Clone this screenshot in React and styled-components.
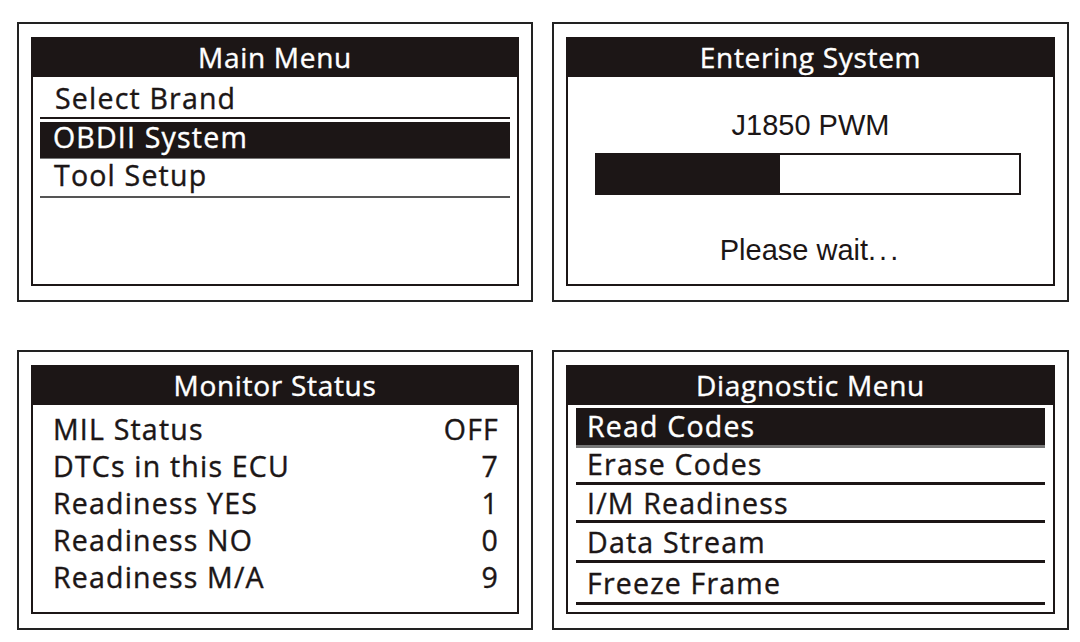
import React from "react";
import styled, { createGlobalStyle } from "styled-components";

const INK = "#1c1616";

const Global = createGlobalStyle`
  html, body { margin: 0; padding: 0; background: #ffffff; }
  body { font-family: "Open Sans", "Noto Sans", sans-serif; color: ${INK}; }
`;

const Page = styled.div`
  width: 1080px;
  height: 642px;
  box-sizing: border-box;
  padding: 22px 0 0 17px;
  display: grid;
  grid-template-columns: 516px 517px;
  grid-template-rows: 280px 280px;
  column-gap: 19px;
  row-gap: 48px;
`;

const Frame = styled.div`
  box-sizing: border-box;
  border: 2px solid #222;
  padding: 13px 12px 14px 12px;
  background: #fff;
  display: flex;
`;

const Screen = styled.div`
  flex: 1;
  box-sizing: border-box;
  border: 2px solid ${INK};
  display: flex;
  flex-direction: column;
  overflow: hidden;
`;

const Header = styled.div`
  height: 40px;
  flex: none;
  box-sizing: border-box;
  background: ${INK};
  color: #fff;
  font-size: 28px;
  letter-spacing: 0.7px;
  -webkit-text-stroke: 0.4px currentColor;
  line-height: 38px;
  text-align: center;
  margin-top: -2px;
  padding-top: 1px;
`;

const Menu = styled.div`
  display: flex;
  flex-direction: column;
  margin: ${(p) => p.$top || 2}px ${(p) => p.$side || 8}px 0;
`;

const Item = styled.div`
  height: ${(p) => p.$h || 36}px;
  flex: none;
  box-sizing: border-box;
  display: flex;
  align-items: center;
  padding-left: ${(p) => p.$pad || 12}px;
  padding-bottom: ${(p) => p.$lift || 0}px;
  font-size: 28.5px;
  letter-spacing: 1.2px;
  -webkit-text-stroke: 0.4px currentColor;
  color: ${(p) => (p.$selected ? "#fff" : INK)};
  background: ${(p) => (p.$selected ? INK : "transparent")};
  border-bottom: ${(p) => p.$rule || "0"} solid ${(p) => p.$ruleColor || INK};
  margin-bottom: ${(p) => p.$gap || 0}px;
`;

const StatusList = styled.div`
  display: flex;
  flex-direction: column;
  padding: 5px 19px 0 20px;
`;

const StatusRow = styled.div`
  height: 37px;
  display: flex;
  align-items: center;
  justify-content: space-between;
  font-size: 28.5px;
  letter-spacing: 1.2px;
  -webkit-text-stroke: 0.4px currentColor;
`;

const Value = styled.span`
  letter-spacing: 1.2px;
  margin-right: -1px;
`;

const Body = styled.div`
  flex: 1;
  display: flex;
  flex-direction: column;
  align-items: center;
  font-family: "Liberation Sans", Arial, sans-serif;
  font-size: 29px;
`;

const Line = styled.div`
  line-height: 32px;
  margin-top: ${(p) => p.$mt || 0}px;
`;

const Bar = styled.div`
  width: 426px;
  height: 42px;
  box-sizing: border-box;
  border: 2px solid ${INK};
  margin-top: ${(p) => p.$mt || 0}px;
  margin-left: -6px;
  display: flex;
`;

const Fill = styled.div`
  background: ${INK};
  height: 100%;
`;

const Dots = styled.span`
  letter-spacing: 3px;
`;

export default function App() {
  const progress = 43.4;
  return (
    <>
      <Global />
      <Page>
        <Frame>
          <Screen>
            <Header>Main Menu</Header>
            <Menu $top={2} $side={7}>
              <Item $h={40} $pad={15} $rule="2px" $gap={3}>Select Brand</Item>
              <Item $selected $h={37} $pad={13} $lift={6} $rule="1px" $ruleColor="#777" $gap={1}>OBDII System</Item>
              <Item $h={38} $pad={14} $lift={7} $rule="2px" $ruleColor="#555">Tool Setup</Item>
            </Menu>
          </Screen>
        </Frame>
        <Frame>
          <Screen>
            <Header>Entering System</Header>
            <Body>
              <Line $mt={32}>J1850 PWM</Line>
              <Bar $mt={12}>
                <Fill style={{ width: `${progress}%` }} />
              </Bar>
              <Line $mt={39}>
                Please wait<Dots>...</Dots>
              </Line>
            </Body>
          </Screen>
        </Frame>
        <Frame>
          <Screen>
            <Header>Monitor Status</Header>
            <StatusList>
              <StatusRow><span>MIL Status</span><Value>OFF</Value></StatusRow>
              <StatusRow><span>DTCs in this ECU</span><Value>7</Value></StatusRow>
              <StatusRow><span>Readiness YES</span><Value>1</Value></StatusRow>
              <StatusRow><span>Readiness NO</span><Value>0</Value></StatusRow>
              <StatusRow><span>Readiness M/A</span><Value>9</Value></StatusRow>
            </StatusList>
          </Screen>
        </Frame>
        <Frame>
          <Screen>
            <Header>Diagnostic Menu</Header>
            <Menu $top={3} $side={8}>
              <Item $selected $h={40} $pad={11} $lift={2} $rule="3px" $ruleColor="#777">Read Codes</Item>
              <Item $h={37} $pad={11} $lift={2} $rule="3px">Erase Codes</Item>
              <Item $h={38} $pad={11} $rule="3px">I/M Readiness</Item>
              <Item $h={40} $pad={11} $rule="3px">Data Stream</Item>
              <Item $h={42} $pad={11} $rule="3px">Freeze Frame</Item>
            </Menu>
          </Screen>
        </Frame>
      </Page>
    </>
  );
}
